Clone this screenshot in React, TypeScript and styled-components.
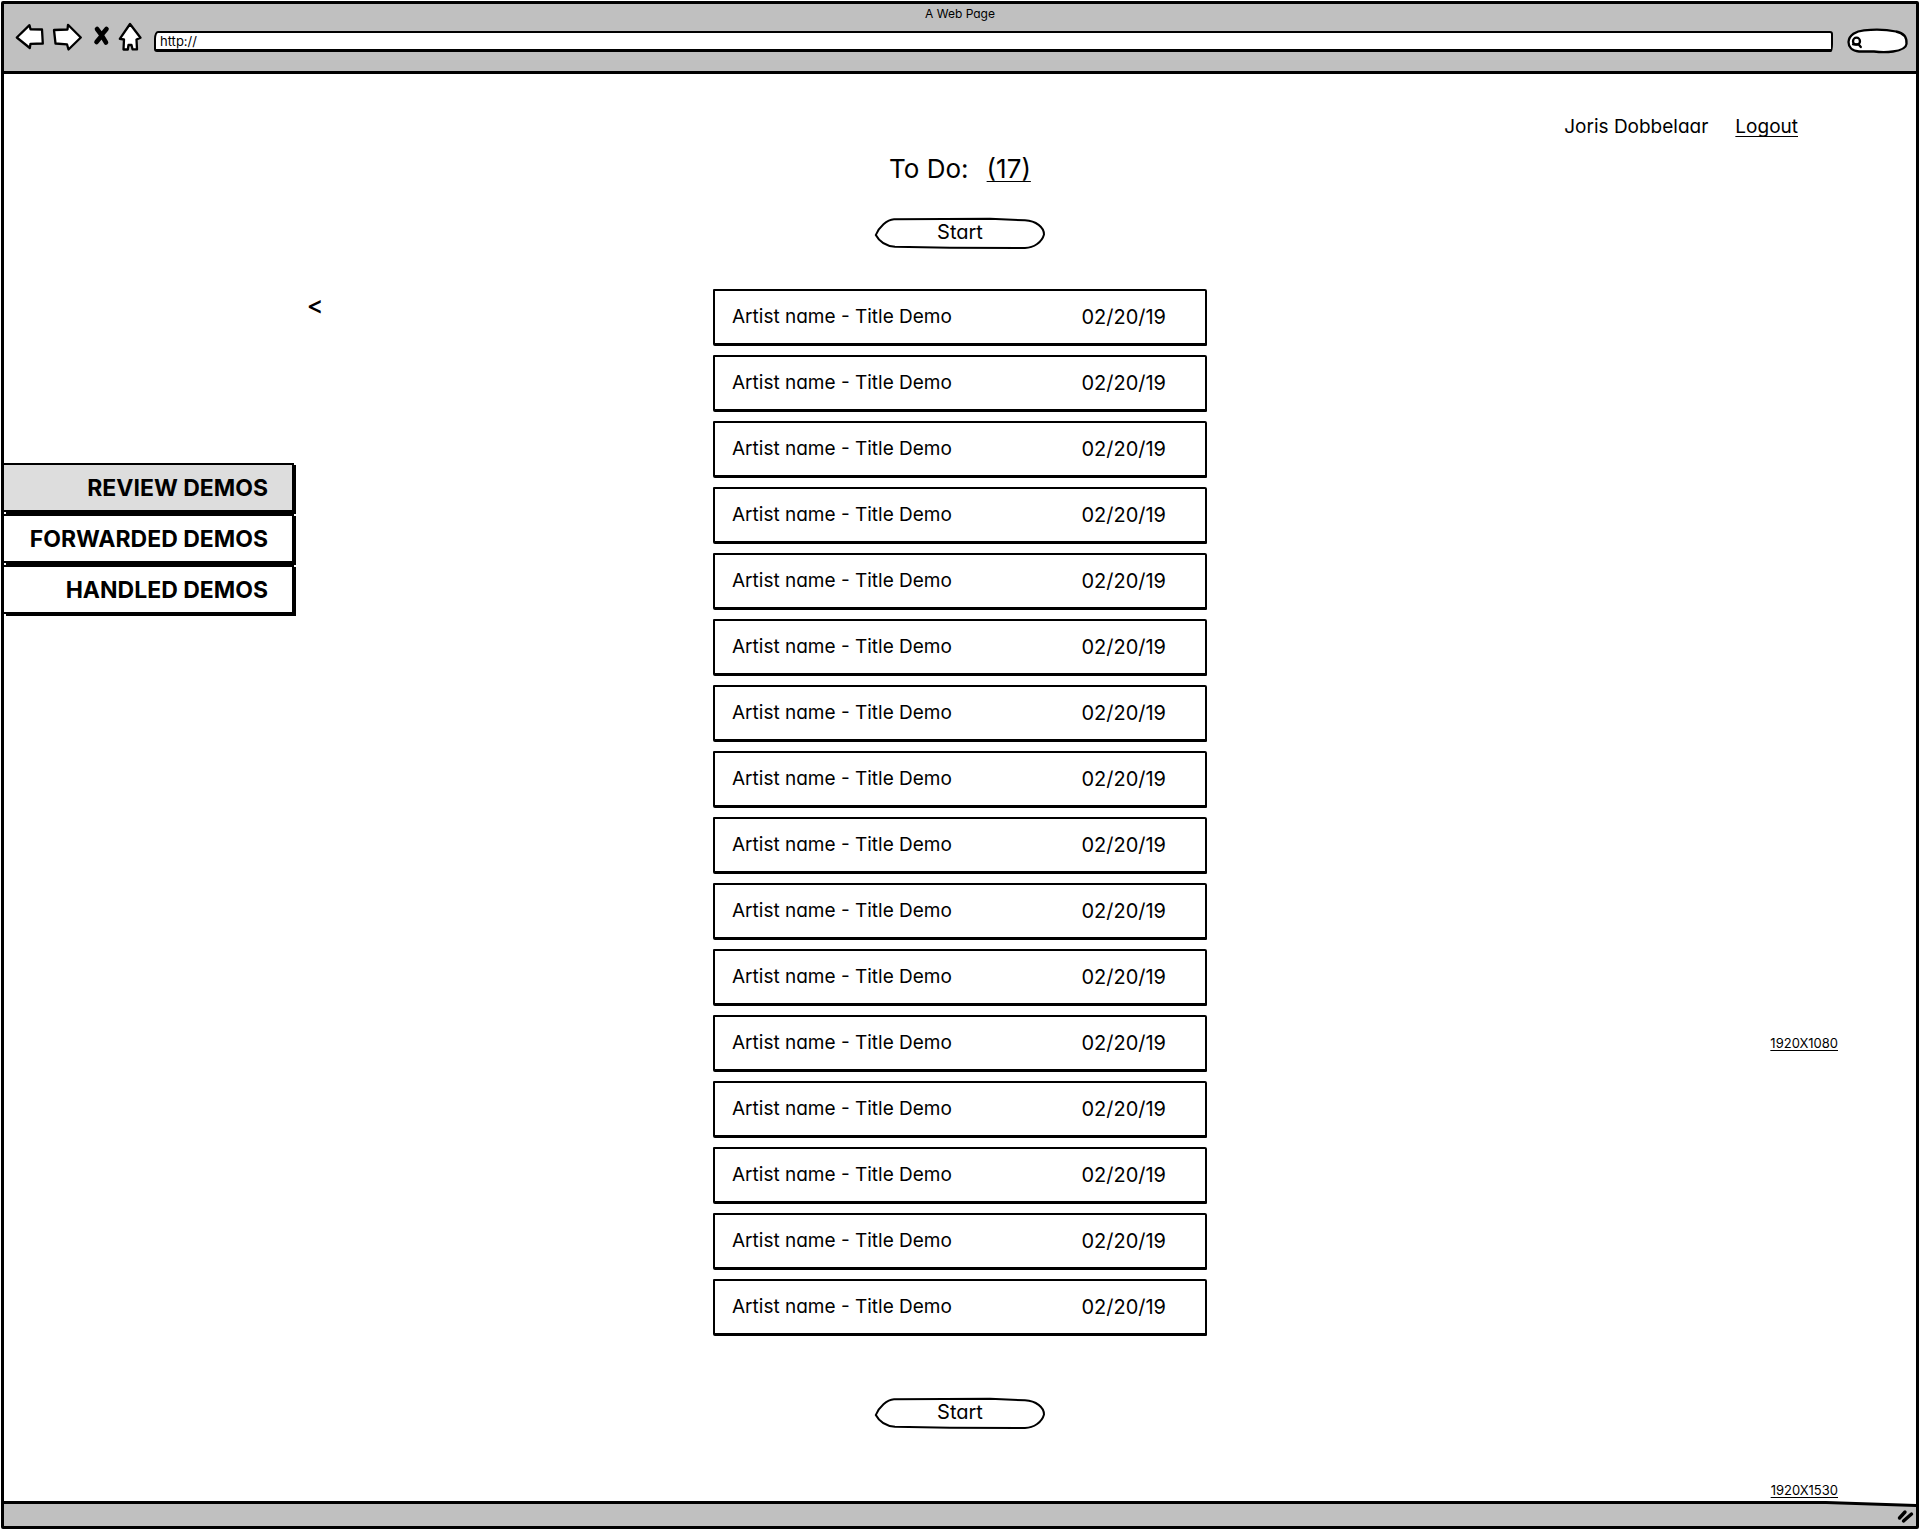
import React from "react";
import styled, { createGlobalStyle } from "styled-components";

const INK = "#000";
const CHROME = "#c0c0c0";

const GlobalStyle = createGlobalStyle`
  *, *::before, *::after { box-sizing: border-box; }
  body {
    margin: 0;
    background: #fff;
    color: ${INK};
    font-family: Inter, "Noto Sans", sans-serif;
    font-feature-settings: "cv11";
    font-size: 19px;
    line-height: 26px;
  }
  button, input {
    margin: 0;
    padding: 0;
    border: 0;
    background: none;
    color: inherit;
    font: inherit;
    font-feature-settings: inherit;
  }
  button { cursor: pointer; }
  h1, ul { margin: 0; padding: 0; font-weight: 400; list-style: none; }
  svg { display: block; }
`;

const Page = styled.div`
  min-height: 100vh;
  padding: 1px;
  display: flex;
`;

const Browser = styled.div`
  flex: 1;
  display: flex;
  flex-direction: column;
  border: 3px solid ${INK};
  border-radius: 2px;
`;

const Chrome = styled.header`
  background: ${CHROME};
  border-bottom: 3px solid ${INK};
  padding-bottom: 17px;
`;

const WindowTitle = styled.div`
  font-size: 12px;
  line-height: 19px;
  text-align: center;
`;

const Toolbar = styled.div`
  display: flex;
  align-items: flex-end;
  margin-top: -1px;
  padding: 0 6px 0 10px;
`;

const AddressInput = styled.input`
  flex: 1;
  min-width: 0;
  height: 21px;
  margin: 0 13px 2px 8px;
  padding-left: 4px;
  border: 2px solid ${INK};
  border-bottom-width: 3px;
  border-radius: 4px 3px 2px 3px / 8px 3px 8px 3px;
  background: #fff;
  font-size: 13px;
  line-height: 16px;
`;

const SearchBox = styled.label`
  display: grid;
  > * { grid-area: 1 / 1; }
`;

const SearchInput = styled.input`
  width: 36px;
  margin-left: 20px;
  font-size: 13px;
  outline: none;
`;

const Content = styled.div`
  flex: 1;
  display: grid;
  grid-template-columns: 1fr 494px 1fr;
`;

const Sidebar = styled.aside`
  padding-top: 216px;
`;

const CollapseButton = styled.button`
  display: block;
  width: 24px;
  margin-left: 299px;
  font-size: 25px;
  font-weight: 500;
  line-height: 30px;
`;

const Menu = styled.nav`
  display: flex;
  flex-direction: column;
  gap: 2px;
  width: 290px;
  margin-top: 143px;
`;

const MenuLink = styled.a<{ $active?: boolean }>`
  padding: 2px 24px 0 0;
  border: 2px solid ${INK};
  border-left: 0;
  box-shadow: 2px 2px 0 ${INK};
  background: ${(p) => (p.$active ? "#ddd" : "#fff")};
  color: inherit;
  font-size: 23px;
  font-weight: 700;
  line-height: 43px;
  text-align: right;
  text-decoration: none;
`;

const Main = styled.main`
  display: flex;
  flex-direction: column;
  align-items: center;
  padding: 79px 0 71px;
`;

const Heading = styled.h1`
  display: flex;
  gap: 18px;
  margin-bottom: 32px;
  font-size: 26px;
  line-height: 32px;
`;

const TextLink = styled.a`
  color: inherit;
  text-decoration: underline 1px;
  text-underline-offset: 3px;
  text-decoration-skip-ink: none;
`;

const PillButton = styled.button`
  display: grid;
  font-size: 20px;
  line-height: 30px;
  > * { grid-area: 1 / 1; }
`;

const DemoList = styled.ul`
  display: flex;
  flex-direction: column;
  gap: 9px;
  width: 100%;
  margin: 39px 0 61px;
`;

const DemoItem = styled.li`
  display: flex;
  justify-content: space-between;
  align-items: center;
  height: 57px;
  padding: 0 39px 0 17px;
  border: 2px solid ${INK};
  border-bottom-width: 3px;
  border-radius: 1px 2px 1px 2px;
`;

const DemoDate = styled.time`
  font-size: 20px;
`;

const Aside = styled.div`
  display: flex;
  flex-direction: column;
  padding-top: 40px;
`;

const Account = styled.div`
  display: flex;
  justify-content: flex-end;
  gap: 27px;
  padding-right: 118px;
`;

const SizeNote = styled.a<{ $last?: boolean }>`
  align-self: flex-end;
  margin: ${(p) => (p.$last ? "auto 78px 3px 0" : "895px 78px 0 0")};
  color: inherit;
  font-size: 13px;
  line-height: 16px;
  text-decoration: underline 1px;
  text-underline-offset: 2px;
`;

const FooterLine = styled.footer`
  padding-top: 3px;
  background: ${INK};
  clip-path: polygon(0 0, calc(100% - 90px) 0, 100% 3px, 100% 100%, 0 100%);
`;

const StatusBar = styled.div`
  display: flex;
  justify-content: flex-end;
  align-items: flex-end;
  height: 22px;
  padding: 0 2px 2px 0;
  background: ${CHROME};
  clip-path: polygon(0 0, calc(100% - 90px) 0, 100% 3px, 100% 100%, 0 100%);
`;

const ChromeIcon = ({ x, width, children }: { x: number; width: number; children: React.ReactNode }) => (
  <svg
    width={width}
    height="32"
    viewBox={`${x} 22 ${width} 32`}
    fill="#fff"
    stroke={INK}
    strokeWidth="2.3"
    strokeLinejoin="round"
    strokeLinecap="round"
    aria-hidden="true"
  >
    {children}
  </svg>
);

const StartButton = () => (
  <PillButton type="button">
    <svg width="172" height="33" viewBox="874 217 172 33" fill="#fff" stroke={INK} strokeWidth="2" aria-hidden="true">
      <path d="M875.8 235 C879 227 887 219.5 894 219.2 L945 218.9 L990 218.8 L1025 220.3 C1036 221 1044 227 1044 234.5 C1042 242 1034 248 1025 248 L950 247.8 L895 246.8 C886 246 879 241 875.8 235 Z" />
    </svg>
    <span>Start</span>
  </PillButton>
);

const demos = Array.from({ length: 16 }, (_, id) => ({
  id,
  name: "Artist name - Title Demo",
  date: "02/20/19",
}));

export default function App() {
  return (
    <Page>
      <GlobalStyle />
      <Browser>
        <Chrome>
          <WindowTitle>A Web Page</WindowTitle>
          <Toolbar>
            <button type="button" aria-label="Back">
              <ChromeIcon x={14} width={34}>
                <path d="M16.8 37.5 L29.5 25.2 L30.5 29.3 L42 29.5 L42.8 43.5 L30.5 43.8 L29.8 48 Z" />
              </ChromeIcon>
            </button>
            <button type="button" aria-label="Forward">
              <ChromeIcon x={48} width={40}>
                <path d="M54 30 L67.5 29.5 L68 24.8 L80.8 37.5 L68.5 49.5 L67 44.3 L55.5 43.5 Z" />
              </ChromeIcon>
            </button>
            <button type="button" aria-label="Stop">
              <ChromeIcon x={88} width={26}>
                <path d="M97 29 L101.5 35 L106.5 29 M101.8 35.5 L106 42.5 M101.5 36 L96.5 42" fill="none" strokeWidth="4.6" />
              </ChromeIcon>
            </button>
            <button type="button" aria-label="Home">
              <ChromeIcon x={114} width={32}>
                <path d="M130 24 L140.5 37.8 L136.5 39.5 L137 49.3 L132.5 49.3 L131.5 45 L128.5 45 L127.8 49.5 L123.5 49.5 L124 39.5 L119.8 38.8 Z" />
              </ChromeIcon>
            </button>
            <AddressInput aria-label="Address" defaultValue="http://" />
            <SearchBox>
              <ChromeIcon x={1846} width={64}>
                <path d="M1848.5 42 C1849 35 1856 31 1864 30.3 Q1882 28.500 1896 31.5 C1904 33 1907 38 1906.5 44 C1906 49 1900 50.5 1893 51.5 Q1884 52.8 1874 51.5 L1859 51.5 C1852 51 1848.5 47 1848.5 42 Z" />
                <circle cx="1856.5" cy="41.2" r="3.5" />
                <path d="M1853 44.3 L1858.5 44.3 L1860.8 47" fill="none" />
              </ChromeIcon>
              <SearchInput aria-label="Search" />
            </SearchBox>
          </Toolbar>
        </Chrome>

        <Content>
          <Sidebar>
            <CollapseButton type="button">&lt;</CollapseButton>
            <Menu>
              <MenuLink href="#review" $active>REVIEW DEMOS</MenuLink>
              <MenuLink href="#forwarded">FORWARDED DEMOS</MenuLink>
              <MenuLink href="#handled">HANDLED DEMOS</MenuLink>
            </Menu>
          </Sidebar>

          <Main>
            <Heading>
              <span>To Do:</span>
              <TextLink href="#todo">(17)</TextLink>
            </Heading>
            <StartButton />
            <DemoList>
              {demos.map((demo) => (
                <DemoItem key={demo.id}>
                  <span>{demo.name}</span>
                  <DemoDate>{demo.date}</DemoDate>
                </DemoItem>
              ))}
            </DemoList>
            <StartButton />
          </Main>

          <Aside>
            <Account>
              <span>Joris Dobbelaar</span>
              <TextLink href="#logout">Logout</TextLink>
            </Account>
            <SizeNote href="#1080">1920X1080</SizeNote>
            <SizeNote href="#1530" $last>1920X1530</SizeNote>
          </Aside>
        </Content>

        <FooterLine>
          <StatusBar>
            <svg width="17" height="16" viewBox="0 0 17 16" stroke={INK} strokeWidth="3.4" strokeLinecap="round" aria-hidden="true">
              <path d="M2.500 10 L8 4 M6.500 13 L14.500 6" />
            </svg>
          </StatusBar>
        </FooterLine>
      </Browser>
    </Page>
  );
}
